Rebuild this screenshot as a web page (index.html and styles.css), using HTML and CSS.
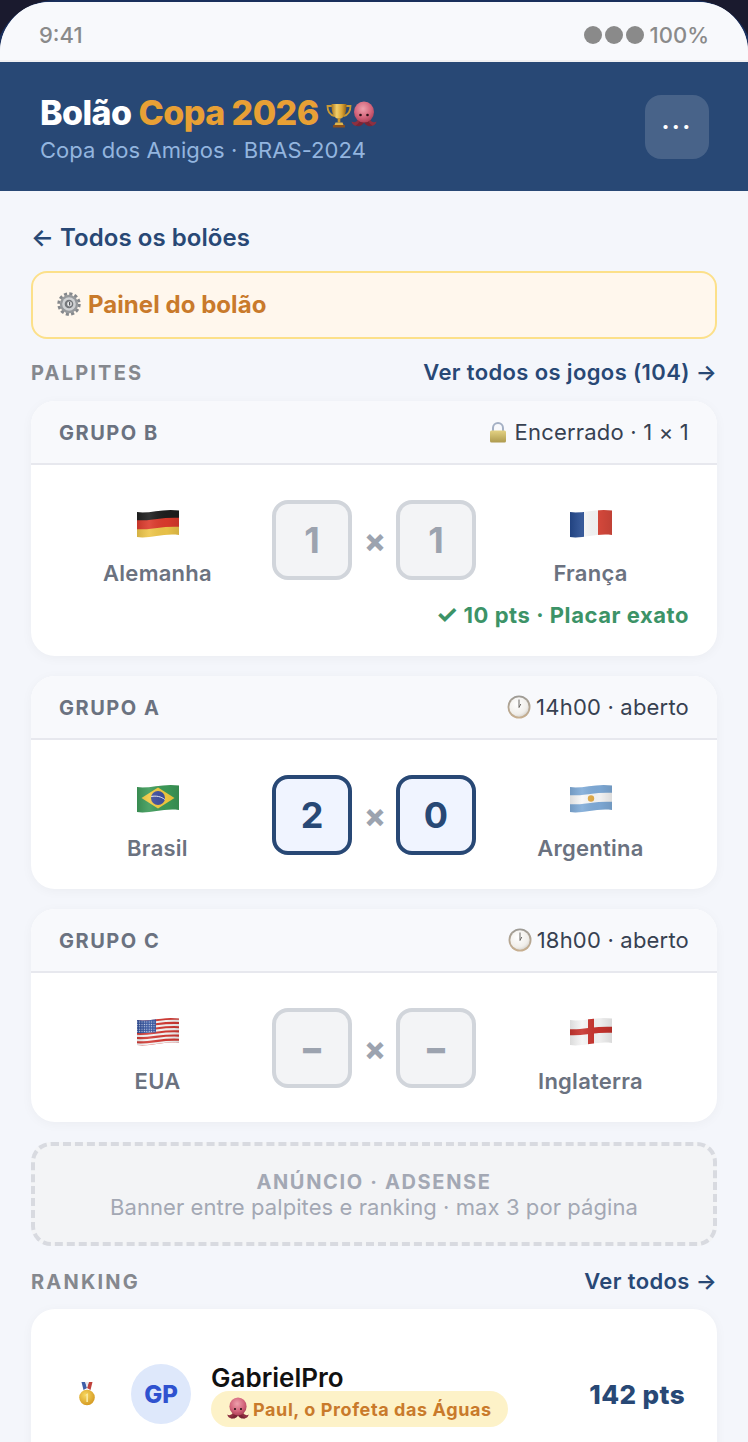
FILE: index.html
```html
<!DOCTYPE html>
<html lang="pt-BR">
<head>
<meta charset="utf-8">
<title>Bolão Copa 2026</title>
<link rel="stylesheet" href="styles.css">
</head>
<body>
<svg class="defs" aria-hidden="true">
  <defs>
    <linearGradient id="gold" x1="0" y1="0" x2="1" y2="0"><stop offset="0" stop-color="#a8741c"/><stop offset=".35" stop-color="#f2cf6a"/><stop offset=".7" stop-color="#d9a233"/><stop offset="1" stop-color="#8f5f16"/></linearGradient>
    <radialGradient id="octoHead" cx=".45" cy=".35" r=".7"><stop offset="0" stop-color="#eea0ac"/><stop offset=".6" stop-color="#d2637a"/><stop offset="1" stop-color="#a83b52"/></radialGradient>
    <radialGradient id="clockFace" cx=".4" cy=".35" r=".75"><stop offset="0" stop-color="#ffffff"/><stop offset=".7" stop-color="#f0eeea"/><stop offset="1" stop-color="#cfcbc5"/></radialGradient>
    <linearGradient id="clockRim" x1="0" y1="0" x2="0" y2="1"><stop offset="0" stop-color="#9c9a95"/><stop offset="1" stop-color="#c9b090"/></linearGradient>
    <linearGradient id="lockBody" x1="0" y1="0" x2="0" y2="1"><stop offset="0" stop-color="#e3d283"/><stop offset="1" stop-color="#ae9a4e"/></linearGradient>
    <radialGradient id="medalGold" cx=".4" cy=".35" r=".75"><stop offset="0" stop-color="#f8d860"/><stop offset="1" stop-color="#d0921a"/></radialGradient>
    <linearGradient id="shade" x1="0" y1="0" x2="1" y2="0"><stop offset="0" stop-color="#000" stop-opacity=".12"/><stop offset=".3" stop-color="#fff" stop-opacity=".1"/><stop offset=".7" stop-color="#000" stop-opacity=".03"/><stop offset="1" stop-color="#000" stop-opacity=".12"/></linearGradient>
    <clipPath id="flagClip"><path d="M1 4C13 6 27 0 43 2.500V27C27 25 13 31 1 29Z"/></clipPath>
    <path id="wave" d="M-1 0C13 2 27-4 45-2" fill="none"/>

    <symbol id="trophy" viewBox="0 0 28 28">
      <path d="M7 5H2.500c0 6 2.500 9 7 10M21 5h4.500c0 6-2.500 9-7 10" fill="none" stroke="#c99a35" stroke-width="1.800"/>
      <path d="M6.500 3h15c0 8-1.500 13-5.500 14.500h-4C8 16 6.500 11 6.500 3Z" fill="url(#gold)"/>
      <rect x="12.700" y="17" width="2.600" height="4.500" fill="#c9962f"/>
      <path d="M10.500 21.500h7l1 2.500h-9Z" fill="#e0b64c"/>
      <rect x="8" y="24" width="12" height="2.500" rx=".5" fill="#8a4f1c"/>
    </symbol>

    <symbol id="octopus" viewBox="0 0 28 28">
      <path d="M9 17C7 21 4.500 22 1.500 20.500c.5 3 3.500 5.500 7 4 2-.8 3-2.500 4-4M19 17c2 4 4.500 5 7.500 3.500-.5 3-3.500 5.500-7 4-2-.8-3-2.500-4-4" fill="#8e3040"/>
      <path d="M10.500 18c-1 3-2 5-5 6.500 3 1.500 6.500.5 8.500-3 2 3.500 5.500 4.500 8.500 3-3-1.500-4-3.500-5-6.500Z" fill="#7a2535"/>
      <ellipse cx="14" cy="11" rx="10" ry="10.500" fill="url(#octoHead)"/>
      <circle cx="10.500" cy="14" r="1.300" fill="#2c1216"/>
      <circle cx="17.500" cy="14" r="1.300" fill="#2c1216"/>
    </symbol>

    <symbol id="gear" viewBox="0 0 24 24">
      <circle cx="12" cy="12" r="10.200" fill="none" stroke="#85888c" stroke-width="3" stroke-dasharray="3.100 2.240"/>
      <circle cx="12" cy="12" r="9.200" fill="#96999c"/>
      <circle cx="12" cy="12" r="6.800" fill="#cfd1d3"/>
      <circle cx="12" cy="12" r="4.300" fill="#74777b"/>
      <circle cx="12.500" cy="12" r="2.400" fill="#e6e7e8"/>
      <rect x="12" y="10" width="1.200" height="3.500" fill="#55585c"/>
    </symbol>

    <symbol id="lock" viewBox="0 0 18 22">
      <path d="M4 10V7a5 5 0 0 1 10 0v3" fill="none" stroke="#a4b0c4" stroke-width="2"/>
      <rect x="1" y="9.500" width="16" height="12" rx="1.500" fill="url(#lockBody)"/>
      <rect x="1" y="15" width="16" height="1" fill="#c8b767"/>
    </symbol>

    <symbol id="clock" viewBox="0 0 24 24">
      <circle cx="12" cy="12" r="11.500" fill="url(#clockRim)"/>
      <circle cx="12" cy="12" r="9.700" fill="url(#clockFace)"/>
      <path d="M12 12.500V4.500M12 12.500l1.800-3.500" stroke="#6d6a66" stroke-width="1" fill="none"/>
    </symbol>

    <symbol id="medal" viewBox="0 0 18 24">
      <path d="M3.500 0h4L9 6 5.500 8Z" fill="#3f5fa8"/>
      <path d="M14.500 0h-4L9 6l3.500 2Z" fill="#c0423c"/>
      <path d="M7 0h4L9 6Z" fill="#e8e8ee"/>
      <circle cx="9" cy="15.500" r="7.800" fill="url(#medalGold)"/>
      <path d="M8 12.200l2-1V20H8.300v-6.800l-.9.500Z" fill="#f9e9a0"/>
    </symbol>

    <symbol id="flag-de" viewBox="0 0 44 30">
      <g clip-path="url(#flagClip)" stroke-width="10">
        <use href="#wave" y="8" stroke="#1e1e1e"/>
        <use href="#wave" y="17" stroke="#dc3a2c"/>
        <use href="#wave" y="26" stroke="#eec64a"/>
        <rect width="44" height="30" fill="url(#shade)" stroke="none"/>
      </g>
    </symbol>

    <symbol id="flag-fr" viewBox="0 0 44 30">
      <g clip-path="url(#flagClip)">
        <rect x="0" width="15" height="30" fill="#23498f"/>
        <rect x="15" width="14" height="30" fill="#f7f7f7"/>
        <rect x="29" width="15" height="30" fill="#d8493c"/>
        <rect width="44" height="30" fill="url(#shade)"/>
      </g>
    </symbol>

    <symbol id="flag-br" viewBox="0 0 44 30">
      <g clip-path="url(#flagClip)">
        <rect width="44" height="30" fill="#3c9a58"/>
        <path d="M22 4.500 38.500 15 22 25.500 5.500 15Z" fill="#f2c93f"/>
        <circle cx="22" cy="15" r="7" fill="#3f4f9e"/>
        <path d="M15.200 13.500c5-1 10 0 13.600 3" stroke="#e8ecf5" stroke-width="1" fill="none"/>
        <rect width="44" height="30" fill="url(#shade)"/>
      </g>
    </symbol>

    <symbol id="flag-ar" viewBox="0 0 44 30">
      <g clip-path="url(#flagClip)" stroke-width="10">
        <use href="#wave" y="8" stroke="#7fabd8"/>
        <use href="#wave" y="17" stroke="#f8f8f8"/>
        <use href="#wave" y="26" stroke="#7fabd8"/>
        <circle cx="22" cy="15.500" r="3.200" fill="#e2ab45" stroke="none"/>
        <rect width="44" height="30" fill="url(#shade)" stroke="none"/>
      </g>
    </symbol>

    <symbol id="flag-us" viewBox="0 0 44 30">
      <pattern id="stars" width="2.400" height="2.400" patternUnits="userSpaceOnUse"><circle cx="1.200" cy="1.200" r=".6" fill="#dfe6f5"/></pattern>
      <g clip-path="url(#flagClip)">
        <rect width="44" height="30" fill="#f6f6f6"/>
        <g stroke="#d33b35" stroke-width="2.100">
          <use href="#wave" y="5"/><use href="#wave" y="9.200"/><use href="#wave" y="13.400"/><use href="#wave" y="17.600"/><use href="#wave" y="21.800"/><use href="#wave" y="26"/><use href="#wave" y="30"/>
        </g>
        <path d="M0 0H20V16.500C13 16.500 7 17.500 0 17Z" fill="#2f4f9c"/>
        <path d="M0 0H20V16.500C13 16.500 7 17.500 0 17Z" fill="url(#stars)"/>
        <rect width="44" height="30" fill="url(#shade)"/>
      </g>
    </symbol>

    <symbol id="flag-en" viewBox="0 0 44 30">
      <g clip-path="url(#flagClip)">
        <rect width="44" height="30" fill="#f5f5f5"/>
        <rect x="19" width="6" height="30" fill="#c8332d"/>
        <use href="#wave" y="16" stroke="#c8332d" stroke-width="6"/>
        <rect width="44" height="30" fill="url(#shade)"/>
      </g>
    </symbol>
  </defs>
</svg>

<div class="device">
  <div class="screen">
    <div class="status">
      <span>9:41</span>
      <div class="status-right">
        <div class="signal"><i></i><i></i><i></i></div>
        <span>100%</span>
      </div>
    </div>

    <header class="app-header">
      <div class="brand">
        <div class="title">
          <span class="title-text">Bolão <em>Copa 2026</em></span>
          <span class="title-icons">
            <svg class="ico-title"><use href="#trophy"/></svg><svg class="ico-title ico-octo"><use href="#octopus"/></svg>
          </span>
        </div>
        <div class="subtitle">Copa dos Amigos · BRAS-2024</div>
      </div>
      <div class="menu-btn">···</div>
    </header>

    <main class="content">
      <a class="back">← Todos os bolões</a>
      <div class="panel"><svg class="ico-gear"><use href="#gear"/></svg>Painel do bolão</div>

      <div class="section-head first">
        <span class="section-title">PALPITES</span>
        <a class="section-link">Ver todos os jogos (104) →</a>
      </div>

      <section class="card">
        <div class="card-head">
          <span class="group">GRUPO B</span>
          <span class="state"><svg class="ico-lock"><use href="#lock"/></svg>Encerrado · 1 × 1</span>
        </div>
        <div class="match">
          <div class="team"><svg class="flag"><use href="#flag-de"/></svg><span class="team-name">Alemanha</span></div>
          <div class="score"><div class="box">1</div><span class="times">×</span><div class="box">1</div></div>
          <div class="team"><svg class="flag"><use href="#flag-fr"/></svg><span class="team-name">França</span></div>
        </div>
        <div class="result"><span class="check">✓</span> 10 pts · Placar exato</div>
      </section>

      <section class="card">
        <div class="card-head">
          <span class="group">GRUPO A</span>
          <span class="state"><svg class="ico-clock"><use href="#clock"/></svg>14h00 · aberto</span>
        </div>
        <div class="match">
          <div class="team"><svg class="flag"><use href="#flag-br"/></svg><span class="team-name">Brasil</span></div>
          <div class="score"><div class="box filled">2</div><span class="times">×</span><div class="box filled">0</div></div>
          <div class="team"><svg class="flag"><use href="#flag-ar"/></svg><span class="team-name">Argentina</span></div>
        </div>
      </section>

      <section class="card">
        <div class="card-head">
          <span class="group">GRUPO C</span>
          <span class="state"><svg class="ico-clock"><use href="#clock"/></svg>18h00 · aberto</span>
        </div>
        <div class="match">
          <div class="team"><svg class="flag"><use href="#flag-us"/></svg><span class="team-name">EUA</span></div>
          <div class="score"><div class="box empty">–</div><span class="times">×</span><div class="box empty">–</div></div>
          <div class="team"><svg class="flag"><use href="#flag-en"/></svg><span class="team-name">Inglaterra</span></div>
        </div>
      </section>

      <div class="ad">
        <div class="ad-title">ANÚNCIO · ADSENSE</div>
        <div class="ad-text">Banner entre palpites e ranking · max 3 por página</div>
      </div>

      <div class="section-head">
        <span class="section-title">RANKING</span>
        <a class="section-link">Ver todos →</a>
      </div>

      <section class="card ranking">
        <div class="rank-row">
          <svg class="ico-medal"><use href="#medal"/></svg>
          <div class="avatar">GP</div>
          <div class="rank-info">
            <div class="rank-name">GabrielPro</div>
            <div class="pill"><svg class="ico-pill"><use href="#octopus"/></svg>Paul, o Profeta das Águas</div>
          </div>
          <div class="rank-pts">142 pts</div>
        </div>
      </section>
    </main>
  </div>
</div>
</body>
</html>
```

FILE: styles.css
```css
* { box-sizing: border-box; }

html, body {
  margin: 0;
  height: 1442px;
  overflow: hidden;
}

body {
  background: #1a1a2e;
  font-family: Inter, "Liberation Sans", sans-serif;
}

.defs { display: block; width: 0; height: 0; }

.device {
  margin: 0 -6px;
  padding: 2px 6px 0;
  height: 1442px;
  background: #1a2f5c;
  border-radius: 62px 62px 0 0;
}

.screen {
  height: 1440px;
  background: #f4f6fb;
  border-radius: 50px 50px 0 0;
  overflow: hidden;
}

.status {
  display: flex;
  justify-content: space-between;
  align-items: center;
  height: 60px;
  padding: 8px 39px 0 39px;
  background: #f8f9fc;
  border-bottom: 2px solid #f0f0f2;
  color: #8a8a8a;
  font-size: 22px;
  font-weight: 500;
}

.status-right { display: flex; align-items: center; gap: 6px; }
.signal { display: flex; gap: 3px; }
.signal i { width: 18px; height: 18px; border-radius: 50%; background: #8a8a8a; }

.app-header {
  display: flex;
  justify-content: space-between;
  align-items: center;
  height: 129px;
  padding: 0 39px 0 40px;
  background: #284875;
}

.brand { padding-top: 3px; }
.title { display: flex; align-items: center; }
.title-text {
  color: #fff;
  font-size: 34px;
  line-height: 42px;
  font-weight: 800;
  letter-spacing: -0.55px;
}
.title-text em { color: #e8a035; font-style: normal; }
.title-icons { display: flex; margin: 3px 0 0 6px; }
.ico-title { width: 28px; height: 28px; }
.ico-octo { margin-left: -3px; }
.subtitle {
  margin-top: 2px;
  color: #93b5df;
  font-size: 22px;
  line-height: 28px;
  letter-spacing: 0.05px;
}

.menu-btn {
  display: flex;
  justify-content: center;
  align-items: center;
  width: 64px;
  height: 64px;
  border-radius: 16px;
  background: rgba(255, 255, 255, 0.15);
  color: #fff;
  font-size: 24px;
  font-weight: 700;
  letter-spacing: 2.4px;
}

.content { padding: 32px 31px 0; }

.back {
  display: block;
  color: #284875;
  font-size: 24px;
  line-height: 30px;
  font-weight: 600;
  letter-spacing: 0.05px;
}

.panel {
  display: flex;
  align-items: center;
  gap: 7px;
  height: 68px;
  margin-top: 18px;
  padding: 0 24px 2px;
  background: #fff7ed;
  border: 2px solid #fce08a;
  border-radius: 16px;
  color: #c97a2b;
  font-size: 24px;
  font-weight: 700;
  letter-spacing: 0.05px;
}
.ico-gear { width: 24px; height: 24px; }

.section-head {
  display: flex;
  justify-content: space-between;
  align-items: center;
  height: 30px;
  margin-top: 20px;
  margin-bottom: 13px;
}
.section-head.first { margin-top: 18px; margin-bottom: 14px; }
.section-title {
  margin-top: 2px;
  color: #85888e;
  font-size: 20px;
  font-weight: 700;
  letter-spacing: 2.2px;
}
.section-link {
  color: #284875;
  font-size: 22px;
  font-weight: 600;
  letter-spacing: 0.37px;
}

.card {
  margin-bottom: 20px;
  background: #fff;
  border-radius: 24px;
  box-shadow: 0 2px 12px rgba(0, 0, 0, 0.04);
  overflow: hidden;
}

.card-head {
  display: flex;
  justify-content: space-between;
  align-items: center;
  height: 64px;
  padding: 0 28px;
  background: #f8f9fc;
  border-bottom: 2px solid #e7e8ee;
}
.group {
  margin-top: 2px;
  color: #6b7280;
  font-size: 20px;
  font-weight: 700;
  letter-spacing: 1.5px;
}
.state {
  display: flex;
  align-items: center;
  color: #374151;
  font-size: 22px;
  letter-spacing: 0.2px;
}
.ico-lock { width: 18px; height: 22px; margin-right: 8px; }
.ico-clock { width: 24px; height: 24px; margin-right: 5px; }

.match {
  display: grid;
  grid-template-columns: 1fr auto 1fr;
  gap: 16px;
  padding: 35px 28px 27px;
}

.team {
  display: flex;
  flex-direction: column;
  align-items: center;
  padding-top: 8px;
}
.flag { width: 44px; height: 30px; }
.team-name {
  margin-top: 21px;
  color: #6b7280;
  font-size: 22px;
  line-height: 28px;
  font-weight: 600;
  letter-spacing: 0.25px;
}

.score { display: flex; align-self: start; align-items: center; gap: 12px; }
.box {
  display: flex;
  justify-content: center;
  align-items: center;
  width: 80px;
  height: 80px;
  background: #f3f4f6;
  border: 4px solid #d1d5db;
  border-radius: 16px;
  color: #9ca3af;
  font-size: 36px;
  font-weight: 700;
}
.box.filled {
  background: #f0f4ff;
  border-color: #284875;
  color: #284875;
}
.box.empty { font-weight: 900; }
.times {
  width: 20px;
  color: #9ca3af;
  font-size: 32px;
  font-weight: 800;
  text-align: center;
}

.result {
  margin-top: -13px;
  padding: 0 28px 27px;
  color: #3c9367;
  font-size: 22px;
  line-height: 28px;
  font-weight: 700;
  letter-spacing: 0.55px;
  text-align: right;
}
.check { font-size: 25px; line-height: 20px; letter-spacing: 0; }

.ad {
  display: flex;
  flex-direction: column;
  justify-content: center;
  align-items: center;
  height: 104px;
  padding-top: 2px;
  background: #f3f4f6;
  border: 4px dashed #d8dae0;
  border-radius: 20px;
  color: #a3a8b4;
  font-size: 20px;
  line-height: 25px;
}
.ad-title { font-weight: 700; letter-spacing: 1.65px; }
.ad-text { font-size: 22px; letter-spacing: 0.08px; }

.ranking { height: 300px; margin: 0; }

.rank-row {
  display: flex;
  align-items: center;
  padding: 55px 32px 0 47px;
}
.ico-medal { flex: none; width: 18px; height: 24px; margin-right: 35px; }
.avatar {
  display: flex;
  justify-content: center;
  align-items: center;
  flex: none;
  width: 60px;
  height: 60px;
  margin-right: 20px;
  border-radius: 50%;
  background: #dee8fb;
  color: #2f52cf;
  font-size: 24px;
  font-weight: 800;
}
.rank-info { flex: 1; height: 60px; }
.rank-name {
  color: #111;
  font-size: 26px;
  line-height: 27px;
  font-weight: 600;
}
.pill {
  display: inline-flex;
  align-items: center;
  height: 36px;
  padding: 0 16px 0 15px;
  border-radius: 18px;
  background: #fdf2c8;
  color: #c97a2b;
  font-size: 18px;
  font-weight: 700;
  letter-spacing: 0.6px;
}
.ico-pill { width: 24px; height: 24px; margin-right: 3px; }
.rank-pts {
  color: #284875;
  font-size: 26px;
  font-weight: 800;
  letter-spacing: 0.4px;
}
```
